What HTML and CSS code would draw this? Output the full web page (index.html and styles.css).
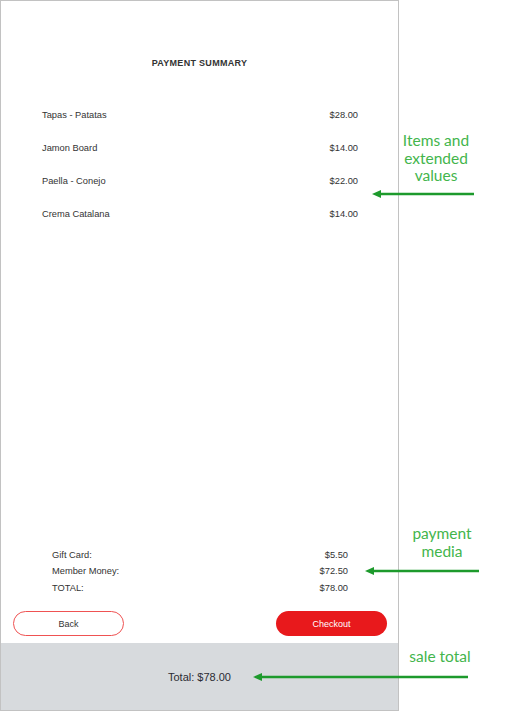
FILE: index.html
```html
<!DOCTYPE html>
<html lang="en">
<head>
    <meta charset="UTF-8">
    <meta name="viewport" content="width=device-width, initial-scale=1.0">
    <title>Payment Summary</title>
    <link rel="stylesheet" href="styles.css">
</head>
<body>

    <div class="page">
        <div class="panel">
            <h1 class="title">PAYMENT SUMMARY</h1>

            <ul class="items">
                <li><span>Tapas - Patatas</span><span>$28.00</span></li>
                <li><span>Jamon Board</span><span>$14.00</span></li>
                <li><span>Paella - Conejo</span><span>$22.00</span></li>
                <li><span>Crema Catalana</span><span>$14.00</span></li>
            </ul>

            <div class="spacer"></div>

            <ul class="media">
                <li><span>Gift Card:</span><span>$5.50</span></li>
                <li><span>Member Money:</span><span>$72.50</span></li>
                <li><span>TOTAL:</span><span>$78.00</span></li>
            </ul>

            <div class="actions">
                <button class="btn btn-back">Back</button>
                <button class="btn btn-checkout">Checkout</button>
            </div>

            <footer class="sale-total">Total: $78.00</footer>
        </div>

        <!-- callouts -->
        <div class="note note-items">Items and<br>extended<br>values</div>
        <svg class="arrow arrow-items" width="104" height="10" viewBox="0 0 104 10">
            <line x1="6" y1="5" x2="102" y2="5" />
            <polygon points="0,5 9,1 9,9" />
        </svg>

        <div class="note note-media">payment<br>media</div>
        <svg class="arrow arrow-media" width="116" height="10" viewBox="0 0 116 10">
            <line x1="6" y1="5" x2="114" y2="5" />
            <polygon points="0,5 9,1 9,9" />
        </svg>

        <div class="note note-total">sale total</div>
        <svg class="arrow arrow-total" width="217" height="10" viewBox="0 0 217 10">
            <line x1="6" y1="5" x2="215" y2="5" />
            <polygon points="0,5 9,1 9,9" />
        </svg>
    </div>

</body>
</html>
```

FILE: styles.css
```css
/* Payment summary screen with callouts */
body {
    margin: 0;
    background-color: #fff;
    font-family: "Liberation Sans", Arial, sans-serif;
    color: #333;
}

.page {
    position: relative;
    width: 507px;
    height: 711px;
}

.panel {
    box-sizing: border-box;
    width: 399px;
    height: 711px;
    border: 1px solid #c2c2c2;
    display: flex;
    flex-direction: column;
    background-color: #fff;
}

.title {
    margin: 0;
    padding-top: 56px;
    font-size: 9px;
    line-height: 12px;
    font-weight: bold;
    letter-spacing: 0.3px;
    text-align: center;
    color: #333;
}

.items, .media {
    list-style: none;
    margin: 0;
    padding: 0;
}

.items {
    margin-top: 29.5px;
    padding: 0 40px 0 41px;
}

.items li {
    display: flex;
    justify-content: space-between;
    align-items: center;
    height: 33px;
    font-size: 9.3px;
}

.spacer {
    flex: 1;
}

.media {
    padding: 0 50px 0 51px;
}

.media li {
    display: flex;
    justify-content: space-between;
    align-items: center;
    height: 16.5px;
    font-size: 9.3px;
}

.actions {
    display: flex;
    justify-content: space-between;
    padding: 15px 11px 7px 12px;
}

.btn {
    box-sizing: border-box;
    width: 111px;
    height: 25px;
    border-radius: 13px;
    font-family: "Liberation Sans", Arial, sans-serif;
    font-size: 9px;
    cursor: pointer;
}

.btn-back {
    background-color: #fff;
    border: 1.5px solid #ef5252;
    color: #333;
}

.btn-checkout {
    background-color: #e8191c;
    border: none;
    color: #fff;
}

.sale-total {
    height: 67px;
    display: flex;
    align-items: center;
    justify-content: center;
    background-color: #d7dadd;
    font-size: 11px;
    color: #2b2b33;
}

/* Green callouts on the right */
.note {
    position: absolute;
    font-family: Lato, "Open Sans", sans-serif;
    font-size: 15.5px;
    line-height: 17.5px;
    color: #43b54c;
    text-align: center;
}

.note-items {
    left: 396px;
    top: 132px;
    width: 80px;
}

.note-media {
    left: 402px;
    top: 525px;
    width: 80px;
}

.note-total {
    left: 400px;
    top: 648px;
    width: 80px;
}

.arrow {
    position: absolute;
}

.arrow line {
    stroke: #1d9a2c;
    stroke-width: 2.5;
}

.arrow polygon {
    fill: #1d9a2c;
}

.arrow-items {
    left: 372px;
    top: 189px;
}

.arrow-media {
    left: 365px;
    top: 566px;
}

.arrow-total {
    left: 253px;
    top: 672px;
}
```
